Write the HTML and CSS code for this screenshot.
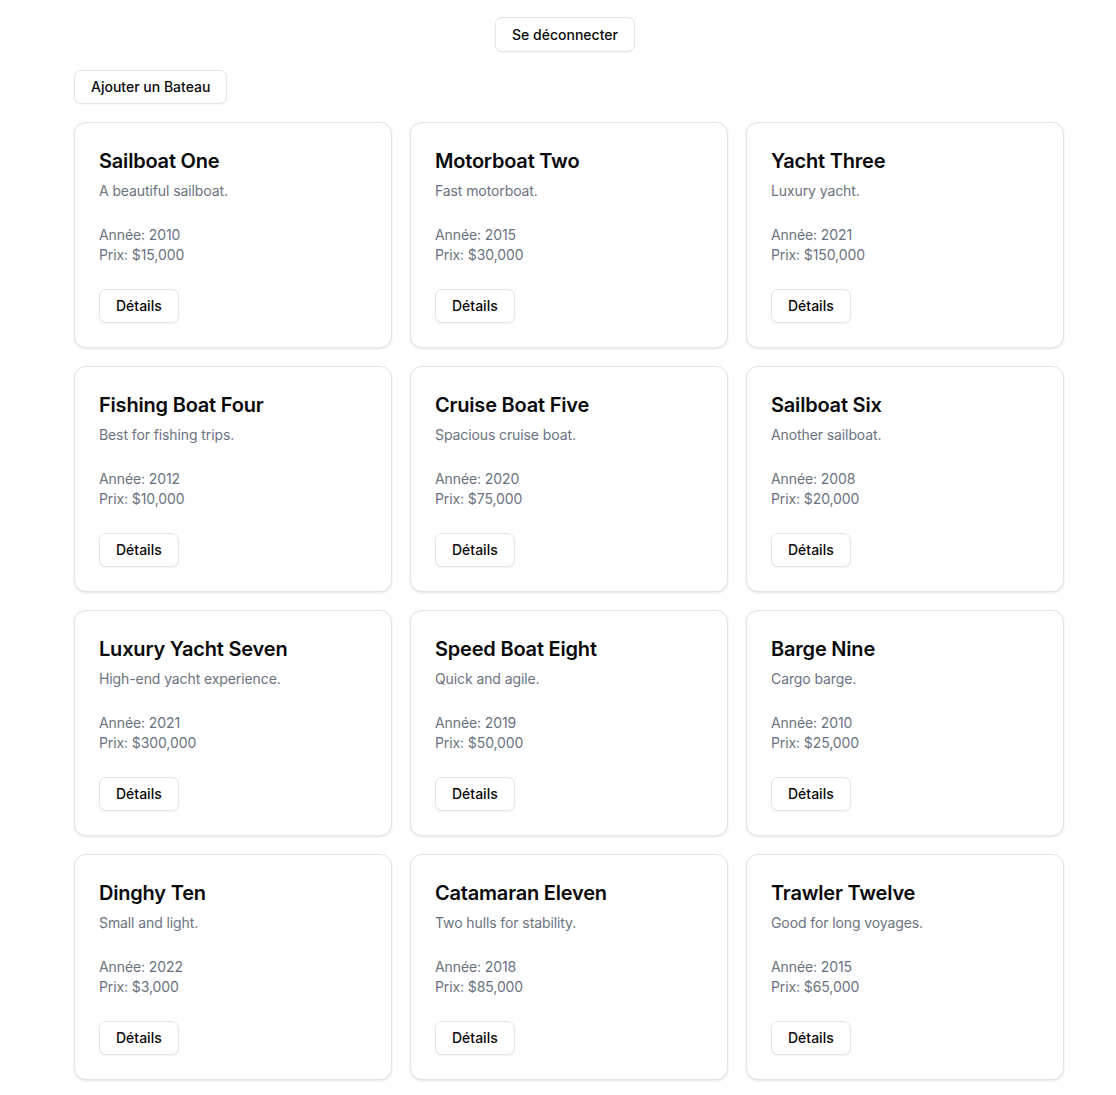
FILE: index.html
```html
<!DOCTYPE html>
<html lang="fr">
<head>
<meta charset="utf-8">
<link rel="stylesheet" href="styles.css">
</head>
<body>
<div class="page">
  <div class="topbar"><button class="btn btn-logout">Se déconnecter</button></div>
  <div class="actions"><button class="btn btn-add">Ajouter un Bateau</button></div>
  <div class="grid">
    <div class="card"><div class="card-header"><h3 class="title">Sailboat One</h3><p class="desc">A beautiful sailboat.</p></div><div class="card-content"><p>Année: 2010</p><p>Prix: $15,000</p></div><div class="card-footer"><button class="btn btn-details">Détails</button></div></div>
    <div class="card"><div class="card-header"><h3 class="title">Motorboat Two</h3><p class="desc">Fast motorboat.</p></div><div class="card-content"><p>Année: 2015</p><p>Prix: $30,000</p></div><div class="card-footer"><button class="btn btn-details">Détails</button></div></div>
    <div class="card"><div class="card-header"><h3 class="title">Yacht Three</h3><p class="desc">Luxury yacht.</p></div><div class="card-content"><p>Année: 2021</p><p>Prix: $150,000</p></div><div class="card-footer"><button class="btn btn-details">Détails</button></div></div>
    <div class="card"><div class="card-header"><h3 class="title">Fishing Boat Four</h3><p class="desc">Best for fishing trips.</p></div><div class="card-content"><p>Année: 2012</p><p>Prix: $10,000</p></div><div class="card-footer"><button class="btn btn-details">Détails</button></div></div>
    <div class="card"><div class="card-header"><h3 class="title">Cruise Boat Five</h3><p class="desc">Spacious cruise boat.</p></div><div class="card-content"><p>Année: 2020</p><p>Prix: $75,000</p></div><div class="card-footer"><button class="btn btn-details">Détails</button></div></div>
    <div class="card"><div class="card-header"><h3 class="title">Sailboat Six</h3><p class="desc">Another sailboat.</p></div><div class="card-content"><p>Année: 2008</p><p>Prix: $20,000</p></div><div class="card-footer"><button class="btn btn-details">Détails</button></div></div>
    <div class="card"><div class="card-header"><h3 class="title">Luxury Yacht Seven</h3><p class="desc">High-end yacht experience.</p></div><div class="card-content"><p>Année: 2021</p><p>Prix: $300,000</p></div><div class="card-footer"><button class="btn btn-details">Détails</button></div></div>
    <div class="card"><div class="card-header"><h3 class="title">Speed Boat Eight</h3><p class="desc">Quick and agile.</p></div><div class="card-content"><p>Année: 2019</p><p>Prix: $50,000</p></div><div class="card-footer"><button class="btn btn-details">Détails</button></div></div>
    <div class="card"><div class="card-header"><h3 class="title">Barge Nine</h3><p class="desc">Cargo barge.</p></div><div class="card-content"><p>Année: 2010</p><p>Prix: $25,000</p></div><div class="card-footer"><button class="btn btn-details">Détails</button></div></div>
    <div class="card"><div class="card-header"><h3 class="title">Dinghy Ten</h3><p class="desc">Small and light.</p></div><div class="card-content"><p>Année: 2022</p><p>Prix: $3,000</p></div><div class="card-footer"><button class="btn btn-details">Détails</button></div></div>
    <div class="card"><div class="card-header"><h3 class="title">Catamaran Eleven</h3><p class="desc">Two hulls for stability.</p></div><div class="card-content"><p>Année: 2018</p><p>Prix: $85,000</p></div><div class="card-footer"><button class="btn btn-details">Détails</button></div></div>
    <div class="card"><div class="card-header"><h3 class="title">Trawler Twelve</h3><p class="desc">Good for long voyages.</p></div><div class="card-content"><p>Année: 2015</p><p>Prix: $65,000</p></div><div class="card-footer"><button class="btn btn-details">Détails</button></div></div>
  </div>
</div>
</body>
</html>
```
FILE: styles.css
```css
* { box-sizing: border-box; }
html, body { margin: 0; padding: 0; background: #ffffff; }
body {
  font-family: Inter, "Noto Sans", sans-serif;
  color: #09090b;
}
.page {
  padding: 17px 0 40px 74px;
  width: 1064px;
}
.topbar {
  display: flex;
  justify-content: center;
  padding-right: 8px;
}
.actions {
  display: flex;
  margin-top: 18px;
}
.btn {
  font-family: Inter, "Noto Sans", sans-serif;
  font-size: 14px;
  font-weight: 500;
  line-height: 20px;
  color: #09090b;
  background: #ffffff;
  border: 1px solid #e4e4e7;
  border-radius: 7px;
  box-shadow: 0 1px 2px rgba(0,0,0,0.05);
  padding: 0 16px;
  cursor: pointer;
}
.btn-logout { height: 35px; }
.btn-add { height: 34px; }
.btn-details { height: 34px; }
.grid {
  margin-top: 18px;
  display: grid;
  grid-template-columns: repeat(3, 318px);
  gap: 18px;
}
.card {
  border: 1px solid #e4e4e7;
  border-radius: 12px;
  background: #fff;
  box-shadow: 0 1px 3px rgba(0,0,0,0.08), 0 1px 2px rgba(0,0,0,0.04);
  height: 226px;
}
.card-header {
  padding: 24px;
  display: flex;
  flex-direction: column;
  gap: 6px;
}
.title {
  margin: 0;
  font-size: 20px;
  line-height: 28px;
  font-weight: 600;
  letter-spacing: -0.2px;
  color: #09090b;
}
.desc {
  margin: 0;
  font-size: 14px;
  line-height: 20px;
  letter-spacing: -0.1px;
  color: #6b7280;
}
.card-content {
  padding: 0 24px 24px 24px;
}
.card-content p {
  margin: 0;
  font-size: 14px;
  line-height: 20px;
  letter-spacing: -0.1px;
  color: #6b7280;
}
.card-footer {
  padding: 0 24px 24px 24px;
  display: flex;
}
```
